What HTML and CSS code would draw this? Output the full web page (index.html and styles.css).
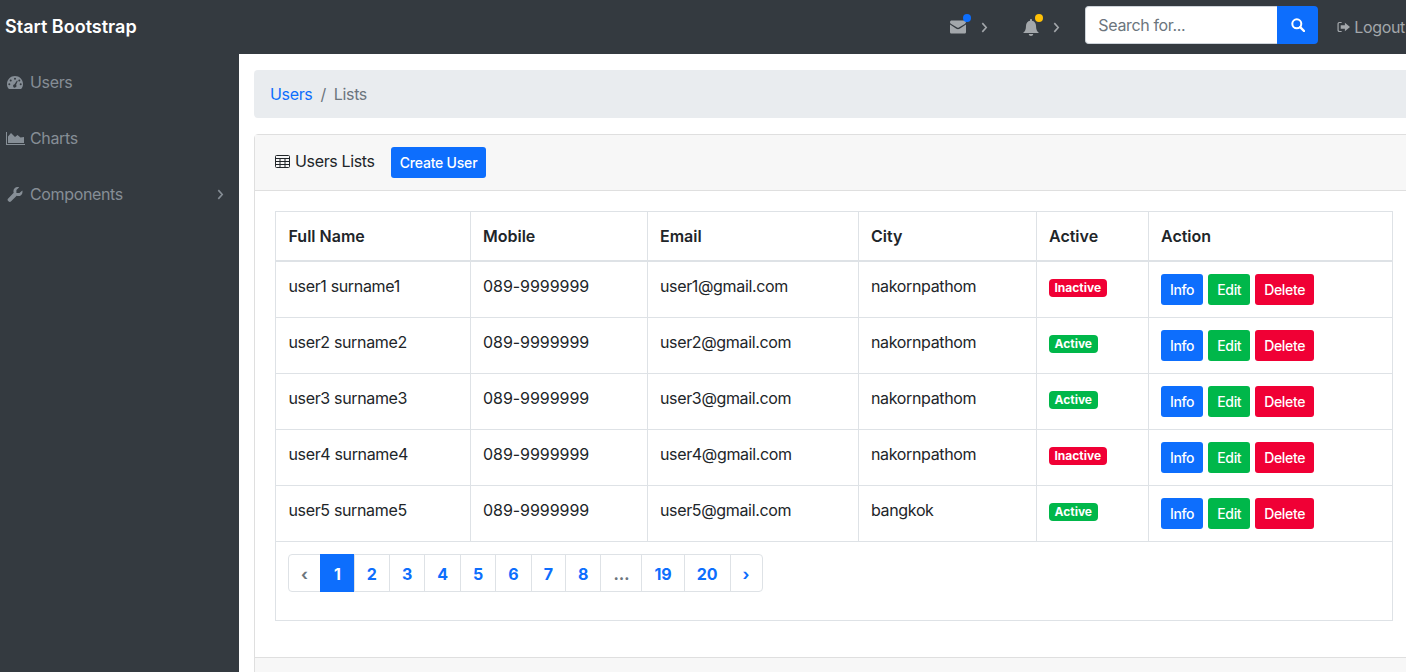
FILE: index.html
```html
<!DOCTYPE html>
<html lang="en">
<head>
    <meta charset="UTF-8">
    <meta name="viewport" content="width=device-width, initial-scale=1.0">
    <title>Users Lists</title>
    <link rel="stylesheet" href="styles.css">
</head>
<body>

    <nav class="navbar">
        <a class="brand" href="#">Start Bootstrap</a>
        <div class="nav-right">
            <a class="nav-alert nav-alert-mail" href="#">
                <svg class="nav-icon" viewBox="0 0 16 14" width="16" height="14"><path d="M0 2.200C0 1 .8.500 1.600.500h12.800c.9 0 1.600.6 1.600 1.600 0 .8-.6 1.400-1.200 1.800L8.900 7.400c-.5.4-1.300.4-1.800 0L1.200 3.900C.6 3.500 0 3 0 2.200zM0 4.600l6.400 4.200c1 .6 2.200.6 3.200 0L16 4.600v7.300c0 .9-.7 1.600-1.600 1.600H1.600C.7 13.500 0 12.800 0 11.900z"/></svg>
                <span class="dot dot-blue"></span>
                <svg class="caret" viewBox="0 0 8 12" width="7" height="11"><path d="M1.500 1l4.500 5-4.500 5" fill="none" stroke="currentColor" stroke-width="1.800"/></svg>
            </a>
            <a class="nav-alert nav-alert-bell" href="#">
                <svg class="nav-icon" viewBox="0 0 16 17" width="16" height="17"><path d="M8 0c.6 0 1 .4 1 1v.8c2.400.4 4 2.400 4 4.900 0 3.800 1 5.500 3 7.300H0c2-1.800 3-3.500 3-7.300C3 4.200 4.600 2.200 7 1.800V1c0-.6.4-1 1-1zM5.800 15h4.400c0 1.200-1 2-2.200 2s-2.200-.8-2.200-2z"/></svg>
                <span class="dot dot-yellow"></span>
                <svg class="caret" viewBox="0 0 8 12" width="7" height="11"><path d="M1.500 1l4.500 5-4.500 5" fill="none" stroke="currentColor" stroke-width="1.800"/></svg>
            </a>
            <form class="search">
                <input type="text" placeholder="Search for...">
                <button type="button" class="search-btn">
                    <svg viewBox="0 0 14 14" width="14" height="14"><circle cx="5.800" cy="5.800" r="4.500" fill="none" stroke="#fff" stroke-width="2"/><path d="M9.200 9.200l3.800 3.800" stroke="#fff" stroke-width="2.400" stroke-linecap="round"/></svg>
                </button>
            </form>
            <a class="logout" href="#">
                <svg viewBox="0 0 14 12" width="13" height="12"><path d="M5 .5H2.500C1.400.5.500 1.400.500 2.500v7c0 1.100.9 2 2 2H5v-1.300H2.700c-.5 0-.9-.4-.9-.9V2.700c0-.5.4-.9.9-.9H5z"/><path d="M8.500 1.500L14 6l-5.500 4.500V8H4V4h4.500z"/></svg>
                Logout
            </a>
        </div>
    </nav>

    <div class="wrapper">
        <aside class="sidebar">
            <a class="side-link" href="#">
                <svg class="side-icon" viewBox="0 0 16 13" width="16" height="13"><path fill-rule="evenodd" d="M8 0c4.400 0 8 3.500 8 7.900 0 1.700-.5 3.300-1.400 4.600-.2.300-.5.500-.9.500H2.300c-.4 0-.7-.2-.9-.5C.5 11.200 0 9.600 0 7.900 0 3.500 3.600 0 8 0zM8 1.800a1 1 0 1 0 0 2 1 1 0 0 0 0-2zM3.700 3.600a1 1 0 1 0 0 2 1 1 0 0 0 0-2zM12.300 3.600a1 1 0 1 0 0 2 1 1 0 0 0 0-2zM2.300 7.200a1 1 0 1 0 0 2 1 1 0 0 0 0-2zM13.700 7.200a1 1 0 1 0 0 2 1 1 0 0 0 0-2zM10 4.500L7.500 8.200a1.700 1.700 0 1 0 1.600.6L10.700 5z"/></svg>
                <span>Users</span>
            </a>
            <a class="side-link" href="#">
                <svg class="side-icon side-icon-chart" viewBox="0 0 19 13" width="19" height="13"><path d="M0 0h1v12h18v1H0z"/><path d="M2 11V4.500L5 1l4 4 2.500-2 3 2.500L18 5v6z"/></svg>
                <span>Charts</span>
            </a>
            <a class="side-link" href="#">
                <svg class="side-icon" viewBox="0 0 16 16" width="15" height="15"><path d="M15.800 3.800c.2.500.2 1 .2 1.400 0 2.500-2 4.500-4.500 4.500-.6 0-1.200-.1-1.700-.3l-6.200 6.100c-.6.600-1.700.6-2.300 0l-.8-.8c-.6-.6-.6-1.700 0-2.300L6.600 6.200C6.400 5.700 6.300 5.100 6.300 4.500 6.300 2 8.300 0 10.800 0c.6 0 1.200.1 1.700.3L9.500 3.300v3.200h3.200z"/></svg>
                <span>Components</span>
                <svg class="side-caret" viewBox="0 0 8 12" width="7" height="11"><path d="M1.500 1l4.500 5-4.500 5" fill="none" stroke="currentColor" stroke-width="1.800"/></svg>
            </a>
        </aside>

        <main class="content">
            <div class="breadcrumb">
                <a href="#">Users</a>
                <span class="crumb-sep">/</span>
                <span class="crumb-current">Lists</span>
            </div>

            <div class="card">
                <div class="card-header">
                    <span class="card-title">
                        <svg viewBox="0 0 15 13" width="15" height="13"><path d="M1.500.5h12a1 1 0 0 1 1 1v10a1 1 0 0 1-1 1h-12a1 1 0 0 1-1-1v-10a1 1 0 0 1 1-1zM.5 3.500h14M.5 6.500h14M.5 9.500h14M5 3.500v9M10 3.500v9" fill="none" stroke="#212529"/></svg>
                        Users Lists
                    </span>
                    <a class="btn btn-blue" href="#">Create User</a>
                </div>
                <div class="card-body">
                    <div class="table-box">
                        <table class="users">
                            <colgroup>
                                <col class="col-name">
                                <col class="col-mobile">
                                <col class="col-email">
                                <col class="col-city">
                                <col class="col-active">
                                <col class="col-action">
                            </colgroup>
                            <thead>
                                <tr>
                                    <th>Full Name</th>
                                    <th>Mobile</th>
                                    <th>Email</th>
                                    <th>City</th>
                                    <th>Active</th>
                                    <th>Action</th>
                                </tr>
                            </thead>
                            <tbody>
                                <tr>
                                    <td>user1 surname1</td>
                                    <td class="phone">089-9999999</td>
                                    <td>user1@gmail.com</td>
                                    <td>nakornpathom</td>
                                    <td><span class="badge badge-red">Inactive</span></td>
                                    <td class="actions"><a class="btn btn-blue" href="#">Info</a><a class="btn btn-green" href="#">Edit</a><a class="btn btn-red" href="#">Delete</a></td>
                                </tr>
                                <tr>
                                    <td>user2 surname2</td>
                                    <td class="phone">089-9999999</td>
                                    <td>user2@gmail.com</td>
                                    <td>nakornpathom</td>
                                    <td><span class="badge badge-green">Active</span></td>
                                    <td class="actions"><a class="btn btn-blue" href="#">Info</a><a class="btn btn-green" href="#">Edit</a><a class="btn btn-red" href="#">Delete</a></td>
                                </tr>
                                <tr>
                                    <td>user3 surname3</td>
                                    <td class="phone">089-9999999</td>
                                    <td>user3@gmail.com</td>
                                    <td>nakornpathom</td>
                                    <td><span class="badge badge-green">Active</span></td>
                                    <td class="actions"><a class="btn btn-blue" href="#">Info</a><a class="btn btn-green" href="#">Edit</a><a class="btn btn-red" href="#">Delete</a></td>
                                </tr>
                                <tr>
                                    <td>user4 surname4</td>
                                    <td class="phone">089-9999999</td>
                                    <td>user4@gmail.com</td>
                                    <td>nakornpathom</td>
                                    <td><span class="badge badge-red">Inactive</span></td>
                                    <td class="actions"><a class="btn btn-blue" href="#">Info</a><a class="btn btn-green" href="#">Edit</a><a class="btn btn-red" href="#">Delete</a></td>
                                </tr>
                                <tr>
                                    <td>user5 surname5</td>
                                    <td class="phone">089-9999999</td>
                                    <td>user5@gmail.com</td>
                                    <td>bangkok</td>
                                    <td><span class="badge badge-green">Active</span></td>
                                    <td class="actions"><a class="btn btn-blue" href="#">Info</a><a class="btn btn-green" href="#">Edit</a><a class="btn btn-red" href="#">Delete</a></td>
                                </tr>
                            </tbody>
                        </table>
                        <ul class="pagination">
                            <li class="page-muted">‹</li>
                            <li class="page-active">1</li>
                            <li>2</li>
                            <li>3</li>
                            <li>4</li>
                            <li>5</li>
                            <li>6</li>
                            <li>7</li>
                            <li>8</li>
                            <li class="page-muted">…</li>
                            <li>19</li>
                            <li>20</li>
                            <li>›</li>
                        </ul>
                    </div>
                </div>
                <div class="card-footer"></div>
            </div>
        </main>
    </div>

</body>
</html>
```
FILE: styles.css
```css
* {
    box-sizing: border-box;
}
html, body {
    height: 100%;
}
body {
    margin: 0;
    overflow: hidden;
    font-family: Inter, "Liberation Sans", sans-serif;
    font-size: 16px;
    line-height: 24px;
    letter-spacing: -0.35px;
    color: #212529;
    background: #fff;
}
a {
    text-decoration: none;
}

/* top bar */
.navbar {
    display: flex;
    align-items: center;
    justify-content: space-between;
    height: 54px;
    padding: 0 1px 0 5px;
    background: #343a40;
}
.brand {
    font-size: 18px;
    font-weight: 600;
    letter-spacing: 0;
    color: #fff;
}
.nav-right {
    display: flex;
    align-items: center;
}
.nav-alert {
    position: relative;
    display: flex;
    align-items: center;
    gap: 14px;
    color: #a3a7ab;
}
.nav-alert-mail {
    gap: 15px;
    margin-right: 35px;
}
.nav-alert-bell {
    margin-right: 25px;
}
.nav-icon {
    fill: #a3a7ab;
}
.caret {
    color: #a3a7ab;
}
.dot {
    position: absolute;
    width: 8px;
    height: 8px;
    border-radius: 50%;
}
.dot-blue {
    top: -6px;
    left: 13px;
    background: #0d6efd;
}
.dot-yellow {
    top: -5px;
    left: 12px;
    background: #ffc107;
}
.search {
    display: flex;
    height: 38px;
    margin: 0 19px 4px 0;
}
.search input {
    width: 192px;
    padding: 6px 12px;
    border: 1px solid #ced4da;
    border-right: 0;
    border-radius: 4px 0 0 4px;
    font: 16px/24px Inter, "Liberation Sans", sans-serif;
    letter-spacing: -0.35px;
    color: #495057;
}
.search input::placeholder {
    color: #6c757d;
}
.search-btn {
    display: flex;
    align-items: center;
    justify-content: center;
    width: 41px;
    padding: 0;
    border: none;
    border-radius: 0 4px 4px 0;
    background: #0d6efd;
}
.logout {
    display: flex;
    align-items: center;
    gap: 4px;
    color: #a3a7ab;
}
.logout svg {
    fill: #a3a7ab;
}

/* sidebar */
.wrapper {
    display: flex;
    height: calc(100% - 54px);
}
.sidebar {
    flex: 0 0 239px;
    background: #343a40;
}
.side-link {
    display: flex;
    align-items: center;
    height: 56px;
    padding: 0 15px 0 7px;
    color: #868e96;
}
.side-icon {
    flex: none;
    width: 16px;
    margin-right: 7px;
    fill: #868e96;
}
.side-icon-chart {
    width: 19px;
    margin: 0 5px 0 -1px;
}
.side-caret {
    margin-left: auto;
}

/* main area */
.content {
    flex: 0 0 1175px;
    padding: 16px 0 0 15px;
}
.breadcrumb {
    display: flex;
    height: 48px;
    align-items: center;
    gap: 8px;
    padding: 0 16px;
    margin-bottom: 16px;
    border-radius: 4px;
    background: #e9ecef;
}
.breadcrumb a {
    color: #0d6efd;
}
.crumb-sep, .crumb-current {
    color: #6c757d;
}

.card {
    border: 1px solid #dfdfdf;
    border-radius: 4px;
}
.card-header {
    display: flex;
    align-items: flex-start;
    height: 56px;
    padding: 12px 20px;
    background: #f7f7f7;
    border-bottom: 1px solid #dfdfdf;
}
.card-title {
    display: flex;
    align-items: center;
    gap: 5px;
    margin-right: 16px;
    line-height: 28px;
}
.card-title svg {
    flex: none;
}
.card-body {
    padding: 20px 20px 36px;
}
.table-box {
    padding-bottom: 28px;
    border: 1px solid #dee2e6;
    border-top: 0;
}
.card-footer {
    height: 60px;
    background: #f7f7f7;
    border-top: 1px solid #dfdfdf;
}

/* table */
.users {
    width: 100%;
    margin-bottom: 12px;
    border-collapse: collapse;
    table-layout: fixed;
}
.col-name { width: 194px; }
.col-mobile { width: 177px; }
.col-email { width: 211px; }
.col-city { width: 178px; }
.col-active { width: 112px; }
.users th, .users td {
    padding: 12px 12px 12px 12.5px;
    text-align: left;
    vertical-align: top;
    border: 1px solid #dee2e6;
}
.users th {
    height: 49px;
    font-weight: 600;
    letter-spacing: 0;
    border-bottom-width: 2px;
}
.users td {
    height: 56px;
}
.users .phone {
    letter-spacing: -0.05px;
}
.users tr > :first-child {
    border-left: 0;
}
.users tr > :last-child {
    border-right: 0;
}
.actions .btn {
    margin-right: 5px;
    letter-spacing: -0.35px;
}

.btn {
    display: inline-block;
    height: 31px;
    padding: 4px 9px;
    border-radius: 3px;
    font-size: 14px;
    line-height: 24px;
    font-weight: 500;
    letter-spacing: -0.2px;
    color: #fff;
}
.btn-blue { background: #0d6efd; }
.btn-green { background: #00b74a; }
.btn-red { background: #f00035; }

.badge {
    display: inline-block;
    padding: 3px 5.5px;
    border-radius: 4px;
    font-size: 12px;
    line-height: 12px;
    font-weight: 700;
    letter-spacing: 0;
    color: #fff;
}
.badge-red { background: #f00035; }
.badge-green { background: #00b74a; }

/* pagination */
.pagination {
    display: inline-flex;
    margin: 0 0 0 12px;
    padding: 0;
    list-style: none;
    border-radius: 4px;
    font-weight: 700;
    letter-spacing: 0;
    color: #0d6efd;
}
.pagination li {
    height: 38px;
    padding: 7px 12px;
    margin-left: -1px;
    line-height: 24px;
    border: 1px solid #dee2e6;
}
.pagination li:first-child {
    margin-left: 0;
    border-radius: 4px 0 0 4px;
}
.pagination li:last-child {
    border-radius: 0 4px 4px 0;
}
.pagination .page-muted {
    color: #6c757d;
}
.pagination .page-active {
    padding: 7px 13px;
    color: #fff;
    background: #0d6efd;
    border-color: #0d6efd;
}
```
